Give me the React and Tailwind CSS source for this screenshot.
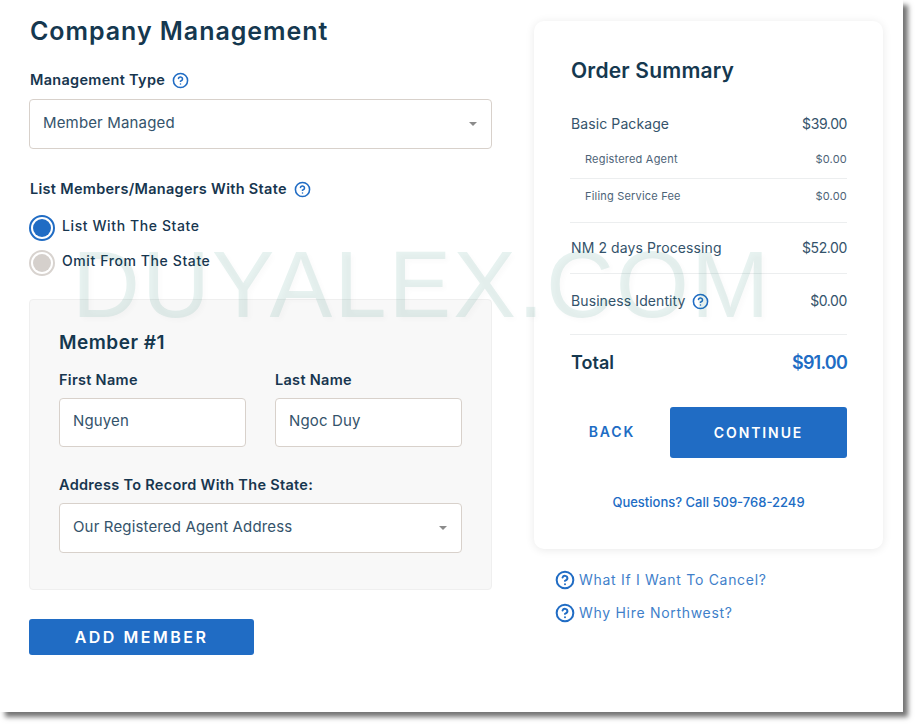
import React from "react";
import { CircleHelp } from "lucide-react";

const labelCls = "text-[14.5px] font-semibold text-[#17364f] tracking-[0.3px]";

const Help = ({ size = "w-[17px] h-[17px]" }) => (
    <CircleHelp className={`${size} text-[#206cc4] shrink-0`} strokeWidth={2.2} />
);

const Caret = () => (
    <span className="w-0 h-0 border-x-[4px] border-x-transparent border-t-[4px] border-t-[#8b8b8b]" />
);

const SelectBox = ({ value, className }) => (
    <div className={`h-[50px] bg-white border border-[#d8d1cb] rounded flex items-center justify-between pl-[13px] pr-[14px] ${className}`}>
        <span className="text-[15px] text-[#34536b] tracking-[0.15px] -mt-[2px]">{value}</span>
        <Caret />
    </div>
);

const Field = ({ label, value }) => (
    <div className="w-[187px]">
        <div className={`${labelCls} leading-[20px]`}>{label}</div>
        <div className="mt-2 h-[49px] bg-white border border-[#d8d1cb] rounded flex items-center pl-[13px]">
            <span className="text-[15px] text-[#34536b] tracking-[0.15px] -mt-[2px]">{value}</span>
        </div>
    </div>
);

const Radio = ({ checked, label }) => (
    <div className="flex items-center h-[35px]">
        <span className={`w-[26px] h-[26px] rounded-full border-2 flex items-center justify-center ${checked ? "border-[#206cc4]" : "border-[#d8d3cf]"}`}>
            <span className={`w-[18px] h-[18px] rounded-full ${checked ? "bg-[#206cc4]" : "bg-[#d5d0cc]"}`} />
        </span>
        <span className="ml-[7px] -mt-[3px] text-sm font-medium text-[#17364f] tracking-[0.6px]">{label}</span>
    </div>
);

const Row = ({ name, price, help, className }) => (
    <div className={`flex items-center justify-between text-sm text-[#34536b] ${className}`}>
        <span className="flex items-center gap-[6px] ml-px tracking-[0.1px]">
            {name}
            {help && <Help />}
        </span>
        <span className="tracking-[-0.4px]">{price}</span>
    </div>
);

const SubRow = ({ name, price, className }) => (
    <div className={`flex items-center justify-between pl-[15px] text-[11px] text-[#4d6377] tracking-[0.2px] ${className}`}>
        <span>{name}</span>
        <span>{price}</span>
    </div>
);

const SideLink = ({ text, className }) => (
    <div className={`flex items-center gap-[4px] text-[#3f7fca] text-sm tracking-[0.7px] ${className}`}>
        <CircleHelp className="w-5 h-5 text-[#206cc4]" strokeWidth={2.4} />
        {text}
    </div>
);

export default function App() {
    return (
        <div className="relative w-[918px] h-[727px] bg-white font-['Inter','Liberation_Sans',sans-serif] overflow-hidden">
            <div className="w-[903px] h-[712px] bg-white shadow-[5px_5px_5px_rgba(0,0,0,0.55)] flex items-start pl-[29px]">
                {/* left column */}
                <div className="w-[463px] shrink-0">
                    <h1 className="mt-[15px] h-[32px] leading-[32px] ml-px text-[25px] font-semibold text-[#15384f] tracking-[0.95px]">
                        Company Management
                    </h1>
                    <div className={`mt-[23px] h-[20px] ml-px flex items-center gap-[7px] ${labelCls}`}>
                        Management Type <Help />
                    </div>
                    <SelectBox value="Member Managed" className="mt-[9px]" />
                    <div className={`mt-[30px] h-[20px] ml-px flex items-center gap-[7px] ${labelCls}`}>
                        List Members/Managers With State <Help />
                    </div>
                    <div className="mt-[11px]">
                        <Radio checked label="List With The State" />
                        <Radio label="Omit From The State" />
                    </div>
                    <div className="mt-[19px] h-[291px] bg-[#f8f8f8] border border-[#efefef] rounded px-[29px] pt-[31px]">
                        <h2 className="text-[19px] leading-[24px] font-semibold text-[#15384f] tracking-[0.5px]">Member #1</h2>
                        <div className="mt-[15px] flex justify-between">
                            <Field label="First Name" value="Nguyen" />
                            <Field label="Last Name" value="Ngoc Duy" />
                        </div>
                        <div className={`mt-[28px] h-[20px] leading-[20px] ${labelCls}`}>
                            Address To Record With The State:
                        </div>
                        <SelectBox value="Our Registered Agent Address" className="mt-[8px]" />
                    </div>
                    <button className="mt-[29px] w-[225px] h-[36px] bg-[#206cc4] rounded-[3px] text-white text-base font-semibold tracking-[2.5px]">
                        ADD MEMBER
                    </button>
                </div>

                {/* right column */}
                <div className="ml-[42px] w-[349px] shrink-0">
                    <div className="mt-[21px] h-[528px] bg-white rounded-[10px] shadow-[0_1px_10px_rgba(0,0,0,0.09)] px-[36px] pt-[36px]">
                        <h2 className="text-[21px] leading-[28px] ml-px font-semibold text-[#15384f] tracking-[0.2px]">Order Summary</h2>
                        <Row name="Basic Package" price="$39.00" className="mt-[27px] h-[24px]" />
                        <SubRow name="Registered Agent" price="$0.00" className="mt-[11px] h-[24px]" />
                        <div className="mt-[7px] border-t border-[#eceeef]" />
                        <SubRow name="Filing Service Fee" price="$0.00" className="mt-[5px] h-[24px]" />
                        <div className="mt-[14px] border-t border-[#eceeef]" />
                        <Row name="NM 2 days Processing" price="$52.00" className="mt-[13px] h-[24px]" />
                        <div className="mt-[13px] border-t border-[#eceeef]" />
                        <Row name="Business Identity" price="$0.00" help className="mt-[15px] h-[24px]" />
                        <div className="mt-[21px] border-t border-[#eceeef]" />
                        <div className="mt-[14px] h-[26px] flex items-center justify-between">
                            <span className="text-[18px] ml-px font-semibold text-[#15384f]">Total</span>
                            <span className="text-[18px] font-semibold text-[#206cc4] tracking-[-0.8px]">$91.00</span>
                        </div>
                        <div className="mt-[32px] flex items-center justify-between">
                            <button className="w-[84px] text-sm font-semibold text-[#206cc4] tracking-[1.9px] -mt-[1px]">BACK</button>
                            <button className="w-[177px] h-[51px] bg-[#206cc4] rounded-[3px] text-white text-sm font-semibold tracking-[1.9px]">
                                CONTINUE
                            </button>
                        </div>
                        <div className="mt-[35px] text-center text-[13px] leading-[18px] font-medium text-[#206cc4]">
                            Questions? Call 509-768-2249
                        </div>
                    </div>
                    <SideLink text="What If I Want To Cancel?" className="mt-[21px] ml-[21px]" />
                    <SideLink text="Why Hire Northwest?" className="mt-[13px] ml-[21px]" />
                </div>
            </div>

            {/* watermark */}
            <div className="absolute left-[72px] top-[230px] pointer-events-none font-['Liberation_Sans',sans-serif] text-[94px] leading-[110px] tracking-[2px] text-[rgba(20,130,110,0.1)] [text-shadow:3px_3px_5px_rgba(0,0,0,0.02)]">
                DUYALEX.COM
            </div>
        </div>
    );
}
